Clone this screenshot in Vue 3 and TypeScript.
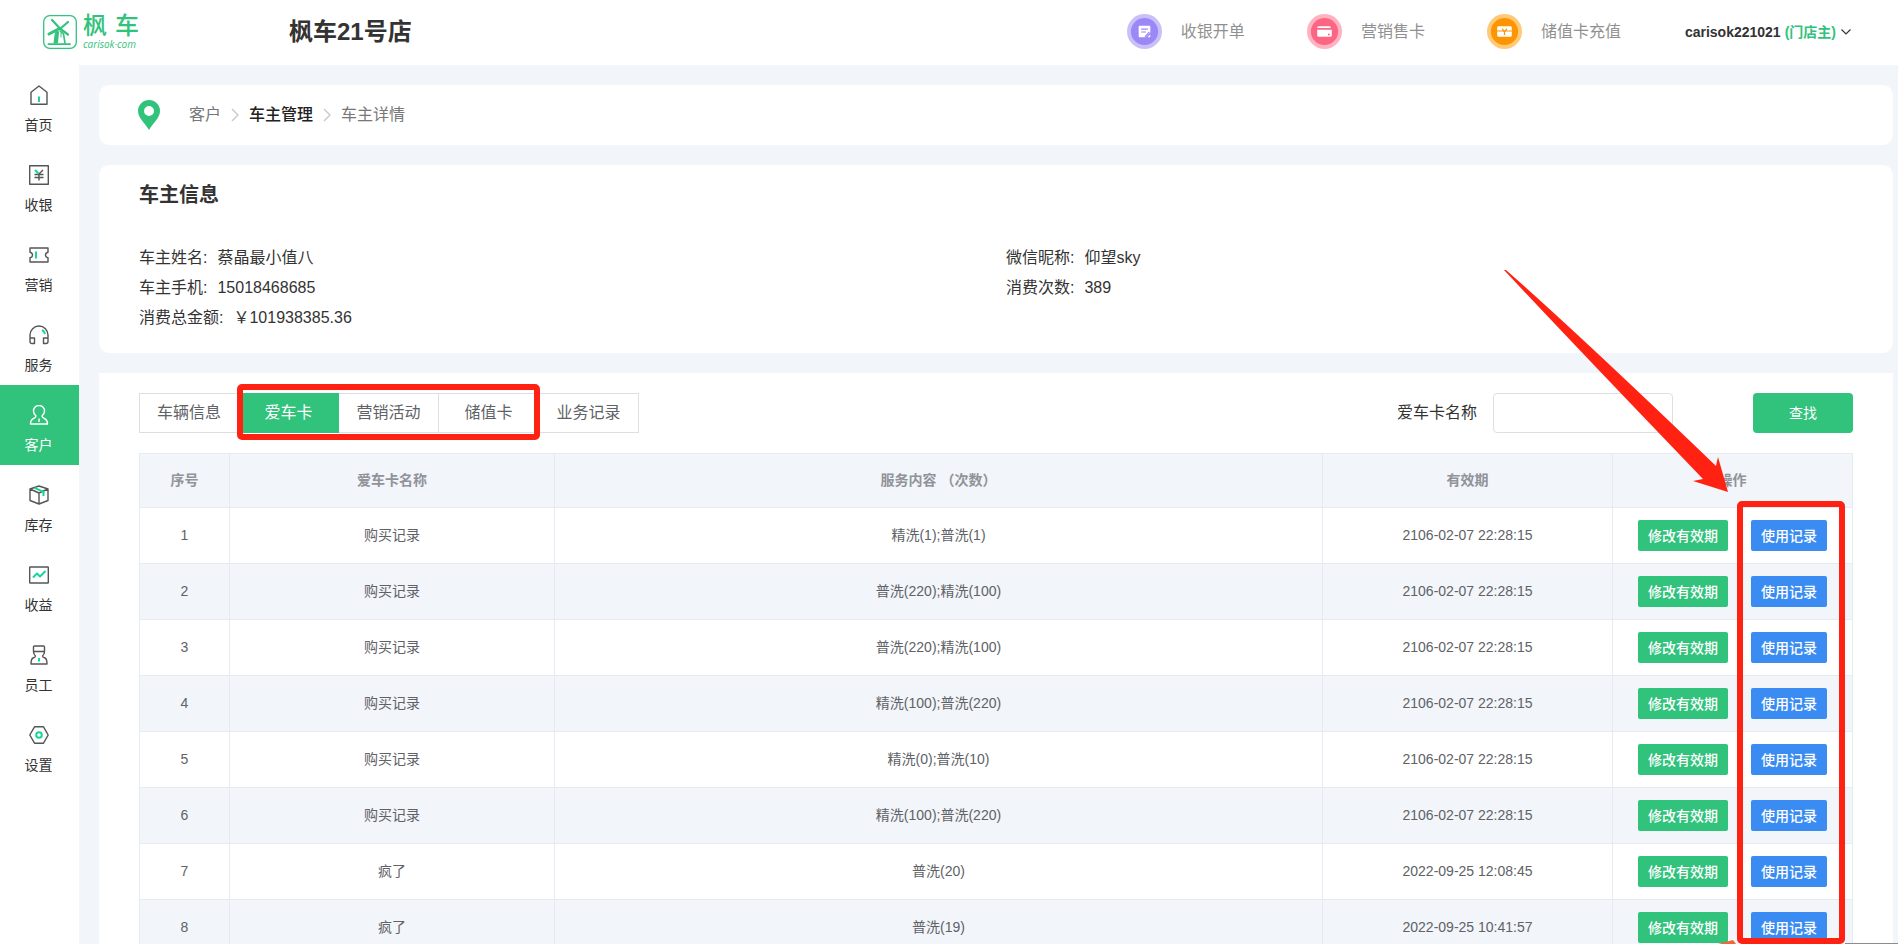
<script setup lang="ts">
import { ref } from 'vue'

interface NavItem {
  key: string
  label: string
}

interface CardRow {
  name: string
  services: string
  expires: string
}

const navItems: NavItem[] = [
  { key: 'home', label: '首页' },
  { key: 'cashier', label: '收银' },
  { key: 'marketing', label: '营销' },
  { key: 'service', label: '服务' },
  { key: 'customer', label: '客户' },
  { key: 'stock', label: '库存' },
  { key: 'income', label: '收益' },
  { key: 'staff', label: '员工' },
  { key: 'settings', label: '设置' },
]
const activeNav = 'customer'

const quickActions: NavItem[] = [
  { key: 'bill', label: '收银开单' },
  { key: 'sell', label: '营销售卡' },
  { key: 'recharge', label: '储值卡充值' },
]

const ownerInfo: { label: string; value: string }[][] = [
  [
    { label: '车主姓名', value: '蔡晶最小值八' },
    { label: '车主手机', value: '15018468685' },
    { label: '消费总金额', value: '￥101938385.36' },
  ],
  [
    { label: '微信昵称', value: '仰望sky' },
    { label: '消费次数', value: '389' },
  ],
]

const tabs: string[] = ['车辆信息', '爱车卡', '营销活动', '储值卡', '业务记录']
const activeTab = ref<string>('爱车卡')
const keyword = ref<string>('')

const rows: CardRow[] = [
  { name: '购买记录', services: '精洗(1);普洗(1)', expires: '2106-02-07 22:28:15' },
  { name: '购买记录', services: '普洗(220);精洗(100)', expires: '2106-02-07 22:28:15' },
  { name: '购买记录', services: '普洗(220);精洗(100)', expires: '2106-02-07 22:28:15' },
  { name: '购买记录', services: '精洗(100);普洗(220)', expires: '2106-02-07 22:28:15' },
  { name: '购买记录', services: '精洗(0);普洗(10)', expires: '2106-02-07 22:28:15' },
  { name: '购买记录', services: '精洗(100);普洗(220)', expires: '2106-02-07 22:28:15' },
  { name: '疯了', services: '普洗(20)', expires: '2022-09-25 12:08:45' },
  { name: '疯了', services: '普洗(19)', expires: '2022-09-25 10:41:57' },
]
</script>

<template>
  <div class="shell">
    <header class="topbar">
      <a class="logo" href="#" aria-label="枫车 carisok.com">
        <svg class="logo-mark" viewBox="0 0 34 34" fill="none" stroke="#31c27c" stroke-linecap="round">
          <rect x="0.7" y="0.7" width="32.6" height="32.6" rx="6" stroke-width="1.3" />
          <path d="M9 5 17 13.5M17.5 13.5 25 7M17.5 14 25 19.5" stroke-width="2.2" />
          <path d="M16.5 13.5 6 19" stroke-width="3" />
          <path d="M17 16 20.500 19 22 28" stroke-width="1.600" />
          <path d="M12.500 17 11 28H14.500L15.500 17Z" fill="#31c27c" stroke-width="1" />
          <path d="M18 18V22" stroke-width="1" />
          <path d="M5.500 29.200H27" stroke-width="1.800" />
        </svg>
        <span class="logo-words">
          <span class="logo-name"><span>枫</span><span>车</span></span>
          <span class="logo-domain">carisok·com</span>
        </span>
      </a>
      <h1 class="shop">枫车21号店</h1>
      <nav class="quick">
        <a v-for="action in quickActions" :key="action.key" class="quick-link" href="#">
          <svg v-if="action.key === 'bill'" class="quick-icon" viewBox="0 0 36 36">
            <circle cx="18" cy="18" r="18" fill="#c9c0f8" />
            <circle cx="18" cy="18" r="14" fill="#9b88f6" />
            <path d="M13 12h10q1 0 1 1v6l-5 5h-6q-1 0-1-1V13q0-1 1-1Z" fill="#fff" />
            <path d="M24 21v2q0 1-1 1h-2Z" fill="#fff" />
            <path d="M14.500 15.500h7M14.500 18.500h5M18.500 23.500l4.500-5" stroke="#9b88f6" stroke-width="1.200" />
          </svg>
          <svg v-else-if="action.key === 'sell'" class="quick-icon" viewBox="0 0 36 36">
            <circle cx="18" cy="18" r="18" fill="#ffb3c1" />
            <circle cx="18" cy="18" r="14" fill="#fd6585" />
            <path d="M12 12.500h11q1.500 0 1.500 2h-14q0-2 1.500-2ZM10.500 16.200h15V22q0 1.500-1.500 1.500H12q-1.500 0-1.500-1.500Z" fill="#fff" />
            <circle cx="22.500" cy="21" r="1" fill="#fd6585" />
          </svg>
          <svg v-else class="quick-icon" viewBox="0 0 36 36">
            <circle cx="18" cy="18" r="18" fill="#ffca78" />
            <circle cx="18" cy="18" r="14" fill="#fd9502" />
            <path d="M12 12.500h12q1.500 0 1.500 1.500v3h-15v-3q0-1.500 1.500-1.500ZM10.500 18h15v4q0 1.500-1.500 1.500H12q-1.500 0-1.500-1.500Z" fill="#fff" />
            <path d="m15.500 15 2.500 3.500L20.500 15M18 18v3.500" fill="none" stroke="#fd9502" stroke-width="1.300" />
          </svg>
          <span>{{ action.label }}</span>
        </a>
      </nav>
      <button class="account" type="button">
        <span>carisok221021</span>
        <span class="role">(门店主)</span>
        <svg class="caret" viewBox="0 0 12 12" fill="none" stroke="#333" stroke-width="1.200">
          <path d="m1.500 3.500 4.500 4.500 4.500-4.500" />
        </svg>
      </button>
    </header>

    <div class="body">
      <nav class="sidebar">
        <a
          v-for="item in navItems"
          :key="item.key"
          class="nav-item"
          :class="{ active: item.key === activeNav }"
          href="#"
        >
          <svg class="nav-icon" viewBox="0 0 20 20" fill="none" stroke="currentColor" stroke-width="1.400" stroke-linejoin="round">
            <template v-if="item.key === 'home'">
              <path d="M2 7.200 10 1l8 6.200v12H2Z" />
              <path class="accent" d="M10 11.500v5.500" />
            </template>
            <template v-else-if="item.key === 'cashier'">
              <rect x="0.700" y="0.700" width="18.600" height="18.600" />
              <path d="m14 5-4 4v6.500M5.500 9.500h9M5.500 12.500h9" />
              <path class="accent" d="m6 5 3.500 3.500" />
            </template>
            <template v-else-if="item.key === 'marketing'">
              <path d="M1 3h18v4.200q-2.500.5-2.500 2.800t2.500 2.800V17H1v-4.200q2.500-.5 2.500-2.800T1 7.200Z" />
              <path class="accent" d="M7 6.500v7" />
            </template>
            <template v-else-if="item.key === 'service'">
              <path d="M1 13v-3a9 9 0 0 1 18 0v3M1 13h4.500v5.500H3q-2 0-2-2ZM19 13h-4.500v5.500H17q2 0 2-2Z" />
              <path class="accent" d="M13 5q2.500 1.200 3 4" />
            </template>
            <template v-else-if="item.key === 'customer'">
              <path d="M7 11Q4.500 9 4.500 6a5.500 5.500 0 0 1 11 0q0 3-2.500 5 0 1.500 2.500 2.500 3 1.500 3 5.500h-17q0-4 3-5.500Q7 12.500 7 11Z" />
              <path d="M10 13.500V17" />
            </template>
            <template v-else-if="item.key === 'stock'">
              <path d="m10 1 9 3v11.500L10 19l-9-3.500V4ZM1 4l9 4 9-4M10 8v11" />
              <path class="accent" d="m5.500 2.800 9 4V11" />
            </template>
            <template v-else-if="item.key === 'income'">
              <rect x="0.700" y="2" width="18.600" height="16" rx="0.500" />
              <path class="accent" d="m4 12.500 4-4 3 3L16.500 6" />
            </template>
            <template v-else-if="item.key === 'staff'">
              <path d="M5.500 1h9q1 0 1 1v4.500q0 3-2 4.500 0 1.200 2.500 2 2 1 2 6H2q0-5 2-6 2.500-.8 2.500-2-2-1.500-2-4.500V2q0-1 1-1ZM4.500 6.500h11" />
              <path class="accent" d="M10 13v3.500" />
            </template>
            <template v-else>
              <path d="M5.500 1.800h9L19.200 10l-4.700 8.200h-9L.8 10Z" />
              <circle class="accent" cx="10" cy="10" r="2.800" />
            </template>
          </svg>
          <span>{{ item.label }}</span>
        </a>
      </nav>

      <main class="content">
        <nav class="card crumbs" aria-label="breadcrumb">
          <svg class="pin" viewBox="0 0 22 30">
            <path fill="#31c27c" fill-rule="evenodd" d="M11 0a11 11 0 0 1 11 11C22 18 15 23 11 30 7 23 0 18 0 11A11 11 0 0 1 11 0Zm0 6a5 5 0 1 0 0 10 5 5 0 0 0 0-10Z" />
          </svg>
          <a href="#">客户</a>
          <svg class="sep" viewBox="0 0 8 14"><path d="m1 1 6 6-6 6" /></svg>
          <a class="strong" href="#">车主管理</a>
          <svg class="sep" viewBox="0 0 8 14"><path d="m1 1 6 6-6 6" /></svg>
          <span>车主详情</span>
        </nav>

        <section class="card owner">
          <h2>车主信息</h2>
          <div class="owner-grid">
            <dl v-for="(column, c) in ownerInfo" :key="c">
              <div v-for="field in column" :key="field.label">
                <dt>{{ field.label }}:</dt>
                <dd>{{ field.value }}</dd>
              </div>
            </dl>
          </div>
        </section>

        <section class="panel">
          <div class="toolbar">
            <div class="tabs" role="tablist">
              <button
                v-for="tab in tabs"
                :key="tab"
                type="button"
                role="tab"
                :aria-selected="tab === activeTab"
                :class="{ active: tab === activeTab }"
                @click="activeTab = tab"
              >{{ tab }}</button>
              <span class="mark mark-tabs"></span>
            </div>
            <form class="search" @submit.prevent>
              <label for="card-name">爱车卡名称</label>
              <input id="card-name" v-model="keyword" type="text" />
              <button type="submit">查找</button>
            </form>
          </div>

          <table>
            <colgroup>
              <col class="c-index" />
              <col class="c-name" />
              <col />
              <col class="c-date" />
              <col class="c-ops" />
            </colgroup>
            <thead>
              <tr>
                <th>序号</th>
                <th>爱车卡名称</th>
                <th>服务内容 （次数）</th>
                <th>有效期</th>
                <th>操作</th>
              </tr>
            </thead>
            <tbody>
              <tr v-for="(row, i) in rows" :key="i">
                <td>{{ i + 1 }}</td>
                <td>{{ row.name }}</td>
                <td>{{ row.services }}</td>
                <td>{{ row.expires }}</td>
                <td class="ops-cell">
                  <div class="ops">
                    <button class="edit" type="button">修改有效期</button>
                    <button class="usage" type="button">使用记录</button>
                  </div>
                </td>
              </tr>
            </tbody>
          </table>
        </section>
      </main>
    </div>

    <svg class="arrow" viewBox="0 0 240 226">
      <path fill="#ff2213" d="M0 1 2 1 Q78 68 212 197L214 188 224 223 189 212 199 210Q74 80 0 1Z" />
    </svg>
    <span class="corner-line"></span>
    <svg class="corner-chip" viewBox="0 0 18 4"><path fill="#f0683a" d="M0 4 15 0 18 4Z" /></svg>
    <span class="mark mark-usage"></span>
  </div>
</template>

<style>
body {
  margin: 0;
}
</style>

<style scoped>
.shell {
  --green: #31c27c;
  --line: #e6eaf2;
  --mark: #ff2213;
  position: relative;
  display: flex;
  flex-direction: column;
  height: 100vh;
  overflow: hidden;
  background: #f2f5fa;
  color: #333;
  font-family: "Liberation Sans", "Noto Sans CJK SC", sans-serif;
  font-size: 14px;
  line-height: 20px;
}
.shell *,
.shell *::before {
  box-sizing: border-box;
}
a {
  color: inherit;
  text-decoration: none;
}
button,
input {
  font: inherit;
}
button {
  padding: 0;
  border: 0;
  background: none;
  color: inherit;
  cursor: pointer;
}

.topbar {
  display: flex;
  flex: none;
  align-items: center;
  height: 65px;
  padding: 0 46px 2px 43px;
  background: #fff;
}
.logo {
  display: flex;
  align-items: center;
  gap: 6px;
  width: 246px;
  color: var(--green);
}
.logo-mark {
  width: 34px;
  height: 34px;
}
.logo-words {
  display: flex;
  flex-direction: column;
}
.logo-name {
  display: flex;
  gap: 8px;
  font-size: 24px;
  font-weight: 500;
  line-height: 24px;
}
.logo-domain {
  font-family: "Open Sans", sans-serif;
  font-size: 10px;
  font-style: italic;
  line-height: 12px;
}
.shop {
  margin: 0;
  font-size: 24px;
  line-height: 32px;
}
.quick {
  display: flex;
  gap: 62px;
  margin-left: auto;
  color: #909090;
  font-size: 16px;
}
.quick-link {
  display: flex;
  align-items: center;
  gap: 19px;
}
.quick-icon {
  width: 35px;
  height: 35px;
}
.account {
  display: flex;
  align-items: center;
  gap: 4px;
  margin-left: 64px;
  font-weight: 700;
}
.role {
  color: var(--green);
}
.caret {
  width: 12px;
  height: 12px;
}

.body {
  display: flex;
  flex: 1;
  min-height: 0;
}
.sidebar {
  flex: none;
  width: 79px;
  background: #fff;
}
.nav-item {
  display: flex;
  flex-direction: column;
  align-items: center;
  gap: 10px;
  height: 80px;
  padding: 20px 2px 0 0;
}
.nav-icon {
  width: 20px;
  height: 20px;
  color: #555;
}
.accent {
  stroke: #18d59b;
  stroke-width: 2;
}
.nav-item.active {
  background: var(--green);
  color: #fff;
}
.active .nav-icon {
  color: #fff;
}

.content {
  display: flex;
  flex: 1;
  flex-direction: column;
  gap: 20px;
  min-width: 0;
  padding: 20px 5px 0 20px;
  overflow-y: auto;
  scrollbar-width: none;
}
.card {
  flex: none;
  border-radius: 10px;
  background: #fff;
}
.crumbs {
  display: flex;
  align-items: center;
  gap: 10px;
  height: 60px;
  padding: 0 39px;
  color: #777;
  font-size: 16px;
}
.pin {
  width: 22px;
  height: 30px;
  margin-right: 19px;
}
.sep {
  width: 8px;
  height: 14px;
  fill: none;
  stroke: #c8ccd4;
  stroke-width: 1.5;
}
.strong {
  color: #222;
  font-weight: 500;
}
.owner {
  padding: 17px 40px 20px;
}
.owner h2 {
  margin: 0 0 35px;
  font-size: 20px;
  line-height: 26px;
}
.owner-grid {
  display: grid;
  grid-template-columns: 1fr 1fr;
  gap: 20px;
  font-size: 16px;
  line-height: 30px;
}
dl,
dd {
  margin: 0;
}
dl > div {
  display: flex;
  gap: 10px;
}

.panel {
  flex: none;
  padding: 20px 40px 40px;
  background: #fff;
}
.toolbar {
  display: flex;
  justify-content: space-between;
  margin-bottom: 20px;
}
.tabs {
  position: relative;
  display: flex;
}
.tabs button {
  width: 100px;
  height: 40px;
  border: solid #dcdfe6;
  border-width: 1px 1px 1px 0;
  color: #606266;
  font-size: 16px;
}
.tabs button:first-child {
  border-left-width: 1px;
}
.tabs .active {
  border-color: var(--green);
  background: var(--green);
  color: #fff;
}
.search {
  display: flex;
  align-items: center;
  font-size: 16px;
}
.search input {
  width: 180px;
  height: 40px;
  margin: 0 80px 0 16px;
  padding: 0 15px;
  border: 1px solid #dcdfe6;
  border-radius: 4px;
}
.search button {
  width: 100px;
  height: 40px;
  border-radius: 4px;
  background: var(--green);
  color: #fff;
  font-size: 14px;
}

table {
  width: 100%;
  table-layout: fixed;
  border-spacing: 0;
  border: solid var(--line);
  border-width: 1px 0 0 1px;
  color: #606266;
}
.c-index {
  width: 90px;
}
.c-name {
  width: 325px;
}
.c-date {
  width: 290px;
}
.c-ops {
  width: 240px;
}
th,
td {
  height: 56px;
  padding: 0 0 2px;
  border: solid var(--line);
  border-width: 0 1px 1px 0;
  text-align: center;
}
th {
  height: 54px;
  background: #f2f5fa;
  color: #909399;
}
tbody tr:nth-child(even) {
  background: #f2f5fa;
}
.ops-cell {
  padding: 0;
}
.ops {
  display: flex;
  justify-content: center;
  gap: 23px;
}
.ops button {
  height: 31px;
  padding: 0 10px;
  border-radius: 2px;
  color: #fff;
  font-weight: 500;
}
.edit {
  background: var(--green);
}
.usage {
  background: #3a8cf2;
}

.mark {
  position: absolute;
  border: 6px solid var(--mark);
  border-radius: 5px;
  pointer-events: none;
}
.mark-tabs {
  inset: -9px 99px -7px 98px;
}
.mark-usage {
  top: 501px;
  right: 53px;
  bottom: 0;
  width: 108px;
}
.arrow {
  position: absolute;
  top: 269px;
  right: 154px;
  width: 240px;
  height: 226px;
  pointer-events: none;
}
.corner-line {
  position: absolute;
  right: 0;
  bottom: 0;
  width: 53px;
  height: 1px;
  background: #8c8c90;
}
.corner-chip {
  position: absolute;
  right: 162px;
  bottom: 0;
  width: 18px;
  height: 4px;
}
</style>
